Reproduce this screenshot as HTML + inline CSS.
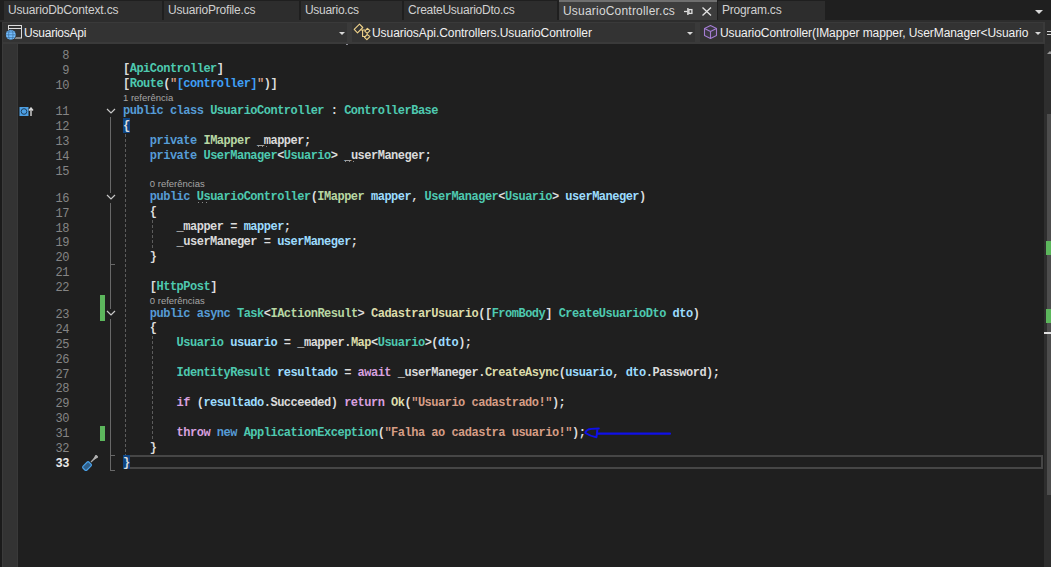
<!DOCTYPE html>
<html><head><meta charset="utf-8">
<style>
*{margin:0;padding:0;box-sizing:border-box}
html,body{width:1051px;height:567px;overflow:hidden;background:#1f1f1f;position:relative}
.a{position:absolute}
.ui{font-family:"Liberation Sans",sans-serif;font-size:12px;white-space:pre;line-height:14px}
.tab{position:absolute;top:1px;height:19px;background:#2d2d2d}
.tab .ui{position:absolute;top:2px;color:#d0d0d0}
.combo{position:absolute;top:23px;height:19px;background:#333333}
.combo .ui{position:absolute;top:2px;color:#f1f1f1}
.dd{position:absolute;top:32px;width:0;height:0;border-left:3px solid transparent;border-right:3px solid transparent;border-top:3px solid #d8d8d8}
.code{font-family:"Liberation Mono",monospace;font-size:12px;font-weight:bold;letter-spacing:-0.5px;white-space:pre;line-height:15px;color:#dcdcdc}
.ln{left:40px;width:29px;text-align:right}
.cl{font-family:"Liberation Sans",sans-serif;font-size:9.5px;white-space:pre;color:#a6a6a6;position:absolute;line-height:11px}
.k{color:#569cd6}.c{color:#d8a0df}.t{color:#4ec9b0}.i{color:#b8d7a3}.m{color:#dcdcaa}.p{color:#9cdcfe}.s{color:#d69d85}.f{color:#dadada}
.guide{position:absolute;width:1px;background:repeating-linear-gradient(to bottom,#5c5c5c 0 3px,transparent 3px 5px)}
.ol{position:absolute;left:110px;width:1px;background:#686868}
.tick{position:absolute;left:110px;width:5px;height:1px;background:#686868}
.chev{position:absolute;left:106px;width:10px;height:6px}
.green{position:absolute;left:100px;width:5px;background:#5cb65c}
</style></head><body>
<!-- tab well -->
<div class="a" style="left:0;top:0;width:1051px;height:22px;background:#1f1f1f"></div>
<div class="a" style="left:0;top:20px;width:1051px;height:2px;background:#2d2d2d"></div>
<div class="tab" style="left:4px;width:158px"><span class="ui" style="left:4px;letter-spacing:-0.16px">UsuarioDbContext.cs</span></div>
<div class="tab" style="left:164px;width:135px"><span class="ui" style="left:4px;letter-spacing:-0.2px">UsuarioProfile.cs</span></div>
<div class="tab" style="left:301px;width:101px"><span class="ui" style="left:4px;letter-spacing:-0.3px">Usuario.cs</span></div>
<div class="tab" style="left:404px;width:153px"><span class="ui" style="left:4px;letter-spacing:-0.26px">CreateUsuarioDto.cs</span></div>
<div class="tab" style="left:559px;top:0;width:158px;height:20px;background:#3d3d3d;border-top:2px solid #6f6f6f"><span class="ui" style="left:4px;top:2px;letter-spacing:0.2px;color:#d8d8d8">UsuarioController.cs</span>
<svg class="a" style="left:125px;top:4px" width="10" height="10" viewBox="0 0 10 10"><path d="M0 5.5H3.5" stroke="#e0e0e0" stroke-width="1.3"/><rect x="3.2" y="2" width="1.4" height="7" fill="#e0e0e0"/><rect x="4.9" y="3.6" width="3" height="3.8" fill="none" stroke="#e0e0e0" stroke-width="1.3"/></svg>
<svg class="a" style="left:143px;top:5px" width="10" height="9" viewBox="0 0 10 9"><path d="M0.5 0.5L9 8.5M9 0.5L0.5 8.5" stroke="#e4e4e4" stroke-width="1.3" fill="none"/></svg>
</div>
<div class="tab" style="left:718px;width:107px"><span class="ui" style="left:4px;letter-spacing:-0.19px">Program.cs</span></div>
<div class="dd" style="left:1035px;top:10px;border-left-width:4px;border-right-width:4px;border-top-width:4px"></div>

<!-- nav bar -->
<div class="a" style="left:2px;top:22px;width:1043px;height:22px;background:#3a3a3a"></div>
<div class="a" style="left:1045px;top:22px;width:6px;height:22px;background:#2d2d2d"></div>
<div class="combo" style="left:3px;width:344px"></div>
<div class="combo" style="left:352px;width:343px"></div>
<div class="combo" style="left:700px;width:343px"></div>
<svg class="a" style="left:5px;top:24px" width="19" height="18" viewBox="0 0 19 18">
<rect x="3.5" y="1.5" width="13" height="12.5" fill="none" stroke="#dcdcdc" stroke-width="1"/><line x1="3.5" y1="4.5" x2="16.5" y2="4.5" stroke="#dcdcdc"/>
<circle cx="5.8" cy="10.8" r="5.6" fill="#333333"/>
<circle cx="5.8" cy="10.8" r="4.9" fill="#75beff"/>
<g stroke="#3a6f9e" stroke-width="0.7" fill="none"><ellipse cx="5.8" cy="10.8" rx="2.2" ry="4.9"/><path d="M0.9 10.8H10.7M1.8 8H9.8M1.8 13.6H9.8"/></g>
</svg>
<span class="a ui" style="left:24px;top:26px;color:#f1f1f1;letter-spacing:-0.22px">UsuariosApi</span>
<div class="dd" style="left:339px"></div>
<svg class="a" style="left:353px;top:23px" width="18" height="18" viewBox="0 0 18 18">
<g fill="none" stroke="#efd28a" stroke-width="1.1" stroke-linejoin="round"><path d="M1.2 6.4L6.5 1.1L9.8 4.5L4.5 9.8Z"/><path d="M11.8 8.2L14.4 5.4L17 7.7L14.2 10.4Z"/><path d="M11.5 14.3L14.2 11.5L17 13.6L13.9 16.7Z"/><path d="M7.6 7H12.1M9.6 7.2V13.5H12"/></g>
</svg>
<span class="a ui" style="left:372px;top:26px;color:#f1f1f1;letter-spacing:-0.07px">UsuariosApi.Controllers.UsuarioController</span>
<div class="dd" style="left:687px"></div>
<svg class="a" style="left:703px;top:24px" width="15" height="16" viewBox="0 0 15 16">
<g stroke="#a47cd2" stroke-width="1.1" stroke-linejoin="round"><path d="M7.5 1.5L13.5 4.5V11.5L7.5 14.5L1.5 11.5V4.5Z" fill="#3b3842"/><path d="M1.5 4.5L7.5 7.5L13.5 4.5M7.5 7.5V14.5" fill="none"/></g>
</svg>
<span class="a ui" style="left:720px;top:26px;color:#f1f1f1;letter-spacing:-0.08px">UsuarioController(IMapper mapper, UserManager&lt;Usuario</span>
<div class="dd" style="left:1035px"></div>
<div class="a" style="left:1047px;top:31px;width:4px;height:1px;background:#d0d0d0"></div>
<div class="a" style="left:1047px;top:34px;width:4px;height:1px;background:#d0d0d0"></div>

<!-- left strips -->
<div class="a" style="left:0;top:22px;width:2px;height:545px;background:#1b1b1b"></div>
<div class="a" style="left:2px;top:44px;width:16px;height:523px;background:#333333;border-left:1px solid #3b3b3b;border-right:1px solid #393939"></div>
<!-- editor -->
<div class="a" style="left:18px;top:44px;width:1026px;height:523px;background:#1f1f1f"></div>
<!-- scrollbar -->
<div class="a" style="left:1044px;top:44px;width:7px;height:523px;background:#2e2e2e"></div>
<div class="a" style="left:1047px;top:114px;width:4px;height:381px;background:#4d4d4d"></div>
<div class="a" style="left:1046px;top:241px;width:5px;height:14px;background:#5cb65c"></div>
<div class="a" style="left:1046px;top:309px;width:5px;height:14px;background:#5cb65c"></div>
<div class="a" style="left:1044px;top:332px;width:7px;height:2px;background:#e0e0e0"></div>
<div class="a" style="left:1047px;top:51px;width:0;height:0;border-left:3px solid transparent;border-right:3px solid transparent;border-bottom:3px solid #999"></div>

<div class="a" style="left:346px;top:44px;width:2px;height:1px;background:#8c8c96"></div>
<div class="guide" style="left:125px;top:134px;height:321px"></div>
<div class="guide" style="left:152px;top:220px;height:30px"></div>
<div class="guide" style="left:152px;top:336px;height:105px"></div>
<svg class="a" style="left:106px;top:108px" width="10" height="6" viewBox="0 0 10 6"><path d="M1 1L5 5L9 1" stroke="#c8c8c8" stroke-width="1.2" fill="none"/></svg>
<svg class="a" style="left:106px;top:194px" width="10" height="6" viewBox="0 0 10 6"><path d="M1 1L5 5L9 1" stroke="#c8c8c8" stroke-width="1.2" fill="none"/></svg>
<svg class="a" style="left:106px;top:310px" width="10" height="6" viewBox="0 0 10 6"><path d="M1 1L5 5L9 1" stroke="#c8c8c8" stroke-width="1.2" fill="none"/></svg>
<div class="ol" style="top:117px;height:76px"></div>
<div class="ol" style="top:203px;height:106px"></div>
<div class="ol" style="top:319px;height:152px"></div>
<div class="tick" style="top:264px"></div>
<div class="tick" style="top:455px"></div>
<div class="tick" style="top:470px"></div>
<div class="green" style="top:295px;height:26px"></div>
<div class="green" style="top:426px;height:15px"></div>
<svg class="a" style="left:19px;top:107px" width="16" height="10" viewBox="0 0 16 10"><rect x="0.5" y="0" width="9" height="9" fill="#4d9fe3"/><circle cx="5" cy="4.5" r="2.8" fill="none" stroke="#1d3f5e" stroke-width="1"/><path d="M12 9V2M10 3.5L12 1L14 3.5" stroke="#d6d6d6" stroke-width="1.4" fill="none"/></svg>
<svg class="a" style="left:82px;top:455px" width="16" height="16" viewBox="0 0 16 16"><path d="M9 7L13 3" stroke="#a8a8a8" stroke-width="1.2"/><path d="M12 4L14 0.5L15.5 2Z" fill="#b0b0b0" stroke="#b0b0b0" stroke-width="1.5"/><rect x="2" y="7" width="5.5" height="8.5" rx="1.5" transform="rotate(45 5 11.5)" fill="#2f5f8a" stroke="#4aa0e6" stroke-width="1.2"/></svg>
<svg class="a" style="left:580px;top:422px" width="95" height="20" viewBox="0 0 95 20"><path d="M18.8 6.6C14 6.6 9.5 6.8 7.5 8C6 9 5 10.3 5.6 11C8 12.8 12 14.5 16.4 15.2C17 12 17.2 9 17.4 6.8" fill="none" stroke="#1010e8" stroke-width="2" stroke-linecap="round" stroke-linejoin="round"/><path d="M17.4 11.7H89.9" stroke="#1010e8" stroke-width="2.3" stroke-linecap="round"/></svg>
<div class="a" style="left:123px;top:455px;width:920px;height:14px;border:2px solid #464646;border-left:0"></div>
<div class="a" style="left:123px;top:455px;width:7px;height:14px;background:#0e4583"></div>
<div class="a" style="left:123px;top:118px;width:7px;height:15px;background:#0e4583"></div>
<div class="a code ln" style="top:49px;color:#858585;font-weight:normal">8</div>
<div class="a code ln" style="top:64px;color:#858585;font-weight:normal">9</div>
<div class="a code" style="left:123px;top:62px">[<span class="t">ApiController</span>]</div>
<div class="a code ln" style="top:79px;color:#858585;font-weight:normal">10</div>
<div class="a code" style="left:123px;top:77px">[<span class="t">Route</span>(<span class="s">"</span><span style="color:#3f9ff5">[controller]</span><span class="s">"</span>)]</div>
<div class="a code ln" style="top:105px;color:#858585;font-weight:normal">11</div>
<div class="a code" style="left:123px;top:104px"><span class="k">public</span> <span class="k">class</span> <span class="t">UsuarioController</span> : <span class="t">ControllerBase</span></div>
<div class="a code ln" style="top:120px;color:#858585;font-weight:normal">12</div>
<div class="a code" style="left:123px;top:119px">{</div>
<div class="a code ln" style="top:135px;color:#858585;font-weight:normal">13</div>
<div class="a code" style="left:123px;top:134px">    <span class="k">private</span> <span class="i">IMapper</span> <span class="f">_mapper</span>;</div>
<div class="a code ln" style="top:150px;color:#858585;font-weight:normal">14</div>
<div class="a code" style="left:123px;top:149px">    <span class="k">private</span> <span class="t">UserManager</span>&lt;<span class="t">Usuario</span>&gt; <span class="f">_userManeger</span>;</div>
<div class="a code ln" style="top:165px;color:#858585;font-weight:normal">15</div>
<div class="a code ln" style="top:192px;color:#858585;font-weight:normal">16</div>
<div class="a code" style="left:123px;top:190px">    <span class="k">public</span> <span class="t">UsuarioController</span>(<span class="i">IMapper</span> <span class="p">mapper</span>, <span class="t">UserManager</span>&lt;<span class="t">Usuario</span>&gt; <span class="p">userManeger</span>)</div>
<div class="a code ln" style="top:207px;color:#858585;font-weight:normal">17</div>
<div class="a code" style="left:123px;top:205px">    {</div>
<div class="a code ln" style="top:222px;color:#858585;font-weight:normal">18</div>
<div class="a code" style="left:123px;top:220px">        <span class="f">_mapper</span> = <span class="p">mapper</span>;</div>
<div class="a code ln" style="top:236px;color:#858585;font-weight:normal">19</div>
<div class="a code" style="left:123px;top:235px">        <span class="f">_userManeger</span> = <span class="p">userManeger</span>;</div>
<div class="a code ln" style="top:251px;color:#858585;font-weight:normal">20</div>
<div class="a code" style="left:123px;top:250px">    }</div>
<div class="a code ln" style="top:266px;color:#858585;font-weight:normal">21</div>
<div class="a code ln" style="top:281px;color:#858585;font-weight:normal">22</div>
<div class="a code" style="left:123px;top:280px">    [<span class="t">HttpPost</span>]</div>
<div class="a code ln" style="top:308px;color:#858585;font-weight:normal">23</div>
<div class="a code" style="left:123px;top:307px">    <span class="k">public</span> <span class="k">async</span> <span class="t">Task</span>&lt;<span class="i">IActionResult</span>&gt; <span class="m">CadastrarUsuario</span>([<span class="t">FromBody</span>] <span class="t">CreateUsuarioDto</span> <span class="p">dto</span>)</div>
<div class="a code ln" style="top:323px;color:#858585;font-weight:normal">24</div>
<div class="a code" style="left:123px;top:321px">    {</div>
<div class="a code ln" style="top:338px;color:#858585;font-weight:normal">25</div>
<div class="a code" style="left:123px;top:336px">        <span class="t">Usuario</span> <span class="p">usuario</span> = <span class="f">_mapper</span>.<span class="m">Map</span>&lt;<span class="t">Usuario</span>&gt;(<span class="p">dto</span>);</div>
<div class="a code ln" style="top:353px;color:#858585;font-weight:normal">26</div>
<div class="a code ln" style="top:368px;color:#858585;font-weight:normal">27</div>
<div class="a code" style="left:123px;top:366px">        <span class="t">IdentityResult</span> <span class="p">resultado</span> = <span class="c">await</span> <span class="f">_userManeger</span>.<span class="m">CreateAsync</span>(<span class="p">usuario</span>, <span class="p">dto</span>.<span class="f">Password</span>);</div>
<div class="a code ln" style="top:382px;color:#858585;font-weight:normal">28</div>
<div class="a code ln" style="top:397px;color:#858585;font-weight:normal">29</div>
<div class="a code" style="left:123px;top:396px">        <span class="c">if</span> (<span class="p">resultado</span>.<span class="f">Succeeded</span>) <span class="c">return</span> <span class="m">Ok</span>(<span class="s">"Usuario cadastrado!"</span>);</div>
<div class="a code ln" style="top:412px;color:#858585;font-weight:normal">30</div>
<div class="a code ln" style="top:427px;color:#858585;font-weight:normal">31</div>
<div class="a code" style="left:123px;top:426px">        <span class="c">throw</span> <span class="k">new</span> <span class="t">ApplicationException</span>(<span class="s">"Falha ao cadastra usuario!"</span>);</div>
<div class="a code ln" style="top:442px;color:#858585;font-weight:normal">32</div>
<div class="a code" style="left:123px;top:441px">    }</div>
<div class="a code ln" style="top:457px;color:#e8e8e8;font-weight:bold">33</div>
<div class="a code" style="left:123px;top:456px">}</div>
<div class="cl" style="left:123.00px;top:92px">1 referência</div>
<div class="cl" style="left:149.80px;top:178px">0 referências</div>
<div class="cl" style="left:149.80px;top:295px">0 referências</div>
<div class="a" style="left:258px;top:146px;width:1px;height:1px;background:#8a8a8a"></div><div class="a" style="left:262px;top:146px;width:1px;height:1px;background:#8a8a8a"></div><div class="a" style="left:266px;top:146px;width:1px;height:1px;background:#8a8a8a"></div>
<div class="a" style="left:345px;top:161px;width:1px;height:1px;background:#8a8a8a"></div><div class="a" style="left:349px;top:161px;width:1px;height:1px;background:#8a8a8a"></div><div class="a" style="left:353px;top:161px;width:1px;height:1px;background:#8a8a8a"></div>
<div class="a" style="left:198px;top:202px;width:1px;height:1px;background:#8a8a8a"></div><div class="a" style="left:202px;top:202px;width:1px;height:1px;background:#8a8a8a"></div><div class="a" style="left:206px;top:202px;width:1px;height:1px;background:#8a8a8a"></div>
</body></html>
